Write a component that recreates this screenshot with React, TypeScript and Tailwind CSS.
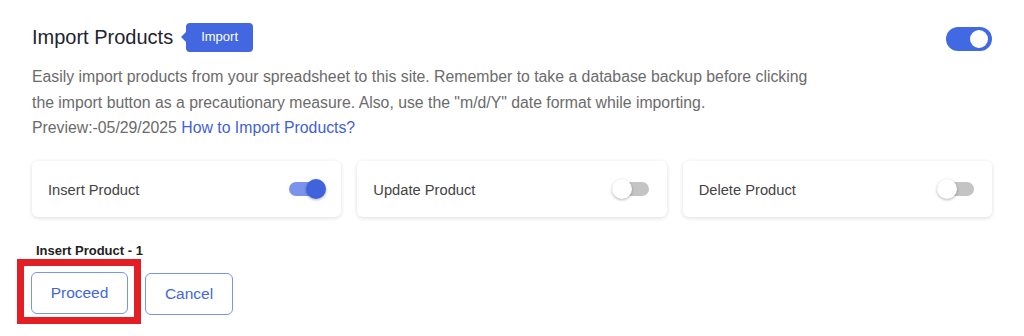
import React, { useState } from "react";

function Switch({ on, onChange }: { on: boolean; onChange: () => void }) {
  return (
    <button onClick={onChange} className="relative w-[40px] h-[20px] flex items-center">
      <span
        className={`block w-[34px] h-[14px] mx-auto rounded-full ${on ? "bg-[#7b93ec]" : "bg-[#c4c4c4]"}`}
      />
      <span
        className={`absolute top-0 w-[20px] h-[20px] rounded-full shadow-[0_1px_3px_rgba(0,0,0,0.3)] ${
          on ? "right-0 bg-[#3f63dd]" : "left-0 bg-white"
        }`}
      />
    </button>
  );
}

const actions = ["Insert Product", "Update Product", "Delete Product"];

export default function App() {
  const [enabled, setEnabled] = useState(true);
  const [active, setActive] = useState(0);

  return (
    <div className="w-[1024px] h-[336px] bg-white px-[32px] pt-[22px] font-['Liberation_Sans',Arial,sans-serif] overflow-hidden">
      <div className="flex items-center justify-between">
        <div className="flex items-center">
          <h1 className="text-[20px] text-[#1e2430] leading-[30px]">Import Products</h1>
          <span className="relative ml-[13px] h-[29px] px-[15px] flex items-center rounded-[4px] bg-[#4267e0] text-white text-[13px]">
            <span className="absolute left-[-5px] top-1/2 -translate-y-1/2 w-0 h-0 border-y-[5px] border-y-transparent border-r-[5px] border-r-[#4267e0]" />
            Import
          </span>
        </div>
        <button
          onClick={() => setEnabled(!enabled)}
          className={`relative w-[46px] h-[24px] rounded-full mt-[4px] ${enabled ? "bg-[#4169e1]" : "bg-[#c4c4c4]"}`}
        >
          <span
            className={`absolute top-[3px] w-[18px] h-[18px] rounded-full bg-white ${enabled ? "right-[4px]" : "left-[4px]"}`}
          />
        </button>
      </div>

      <p className="mt-[12px] text-[15.8px] leading-[25.5px] text-[#6b6b6b]">
        Easily import products from your spreadsheet to this site. Remember to take a database backup before clicking
        <br />
        the import button as a precautionary measure. Also, use the "m/d/Y" date format while importing.
        <br />
        Preview:-05/29/2025{" "}
        <a href="#" className="text-[#3f5fd8]">
          How to Import Products?
        </a>
      </p>

      <div className="mt-[20px] grid grid-cols-3 gap-[16px]">
        {actions.map((a, i) => (
          <div
            key={a}
            className="h-[56px] rounded-[6px] bg-white shadow-[0_1px_4px_rgba(0,0,0,0.14)] flex items-center justify-between pl-[16px] pr-[15px]"
          >
            <span className="text-[14.7px] text-[#444] mt-[3px]">{a}</span>
            <Switch on={active === i} onChange={() => setActive(i)} />
          </div>
        ))}
      </div>

      <div className="mt-[24px] pl-[4px] text-[13px] font-bold text-[#222]">{actions[active]} - 1</div>

      <div className="mt-[-1px] flex items-start gap-[4px]">
        <div className="ml-[-15px] border-[7px] border-[#e31e24] pl-[7px] pr-[6px] pt-[6px] pb-[3px]">
          <button className="block w-[97px] h-[42px] rounded-[6px] border border-[#7b93ec] text-[#4466dd] text-[15.5px]">
            Proceed
          </button>
        </div>
        <button className="mt-[14px] w-[88px] h-[42px] rounded-[6px] border border-[#7b93ec] text-[#4466dd] text-[15.5px]">
          Cancel
        </button>
      </div>
    </div>
  );
}
